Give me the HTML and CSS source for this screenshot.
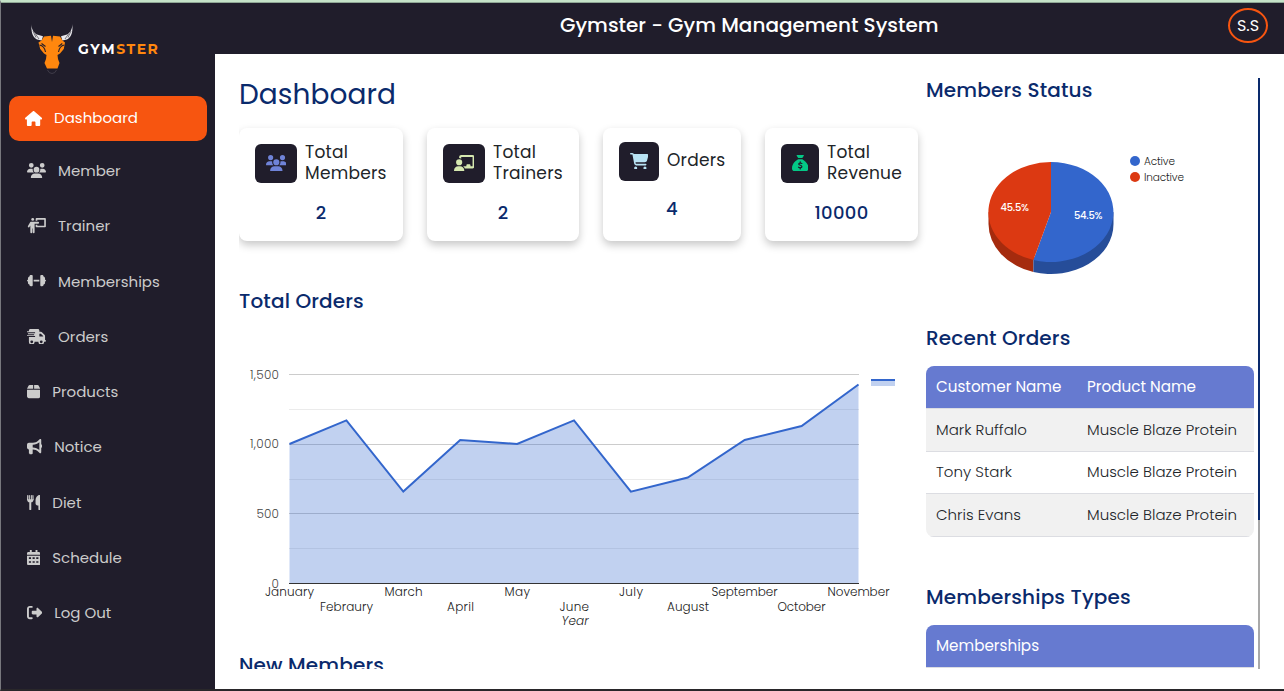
FILE: index.html
```html
<!DOCTYPE html>
<html lang="en">
<head>
<meta charset="utf-8">
<title>Gymster - Gym Management System</title>
<link rel="stylesheet" href="styles.css">
</head>
<body>
<div class="app">
  <aside class="sidebar">
    <div class="brand">
      <svg class="bull" viewBox="30 23 44 52">
        <path d="M31.2 24 C31.4 28 33 32.5 37 34.6 L43 36.2 L41.6 40.5 L37 39.4 C31.5 36.5 31.5 31 31.2 24Z M72.5 24 C72.3 28 71 32.5 67 34.6 L61 36.2 L62.4 40.5 L67 39.4 C72.5 36.5 72.5 31 72.5 24Z" fill="#e8e8ec"/>
        <path d="M33 31 L36 37.5 M35.5 34 L39 39 M71 31 L68 37.5 M68.5 34 L65 39" stroke="#55535c" stroke-width=".8"/>
        <path d="M44 36.5 L51 35.8 L52 42 L53 35.8 L60 36.5 L62.5 40.5 L65 42.5 L63.8 49 L60 53.5 L57.5 55 L58 59 L59.5 63 L57.5 68.5 L47 68.5 L44.5 63 L46 59 L46.5 55 L44 53.5 L40.2 49 L38.5 42.5 L41.5 40.5Z" fill="#ff870e"/>
        <path d="M39.5 45 Q44.5 46 45.5 52 M64.3 45 Q59.5 46 58.5 52 M41.5 43.5 L45.5 46.5 M62.3 43.5 L58.5 46.5" fill="none" stroke="#201d2b" stroke-width="1.1"/>
        <path d="M47.5 70 Q49 73.5 52 73.5 Q55 73.5 56.5 70" fill="none" stroke="#474450" stroke-width=".8"/>
      </svg>
      <span class="brand-name">GYM<b>STER</b></span>
    </div>
    <nav class="nav">
      <a class="nav-item active raised"><svg class="i512w" viewBox="0 0 576 512"><path d="M575.8 255.5c0 18-15 32.1-32 32.1h-32l.7 160.2c0 2.7-.2 5.4-.5 8.1V472c0 22.1-17.9 40-40 40H392c-22.1 0-40-17.9-40-40V384c0-17.7-14.3-32-32-32H256c-17.7 0-32 14.3-32 32v88c0 22.1-17.9 40-40 40H104c-22.1 0-40-17.9-40-40V287.6H32c-18 0-32-14-32-32.1c0-9 3-17 10-24L266.4 8c7-7 15-8 22-8s15 2 21 7L564.8 231.5c8 7 12 15 11 24z"/></svg><span>Dashboard</span></a>
      <a class="nav-item"><svg class="i640" viewBox="0 0 640 512"><path id="users" d="M144 0a80 80 0 1 1 0 160A80 80 0 1 1 144 0zM512 0a80 80 0 1 1 0 160A80 80 0 1 1 512 0zM0 298.7C0 239.8 47.8 192 106.7 192h42.7c15.9 0 31 3.5 44.6 9.7c-1.3 7.2-1.9 14.7-1.9 22.3c0 38.2 16.8 72.5 43.3 96H21.3C9.6 320 0 310.4 0 298.7zM404.6 320c26.6-23.5 43.3-57.8 43.3-96c0-7.6-.7-15-1.9-22.3c13.6-6.3 28.7-9.7 44.6-9.7h42.7C592.2 192 640 239.8 640 298.7c0 11.8-9.6 21.3-21.3 21.3H404.6zM224 224a96 96 0 1 1 192 0 96 96 0 1 1-192 0zM128 485.3C128 411.7 187.7 352 261.3 352H378.7C452.3 352 512 411.7 512 485.3c0 14.7-11.9 26.7-26.7 26.7H154.7c-14.7 0-26.7-11.9-26.7-26.7z"/></svg><span>Member</span></a>
      <a class="nav-item raised"><svg class="i640" viewBox="0 0 640 512"><circle cx="192" cy="48" r="48"/><path d="M145 128h230a32 32 0 0 1 0 64H256v288a32 32 0 0 1-64 0V352h-16v128a32 32 0 0 1-64 0V257l-25 42a32 32 0 0 1-55-33l58-97c14-25 30-41 55-41z"/><path d="M320 96V32h288v256H320v-64" fill="none" stroke="currentColor" stroke-width="56" stroke-linejoin="round"/></svg><span>Trainer</span></a>
      <a class="nav-item"><svg class="i640 dumbbell" viewBox="0 0 640 512"><path d="M128 64h32a32 32 0 0 1 32 32v320a32 32 0 0 1-32 32h-32c-26 0-48-22-48-48v-16c-26 0-48-22-48-48v-48a32 32 0 0 1 0-64v-48c0-26 22-48 48-48v-16c0-26 22-48 48-48zM512 64h-32a32 32 0 0 0-32 32v320a32 32 0 0 0 32 32h32c26 0 48-22 48-48v-16c26 0 48-22 48-48v-48a32 32 0 0 0 0-64v-48c0-26-22-48-48-48v-16c0-26-22-48-48-48zM224 224h192v64H224z"/></svg><span>Memberships</span></a>
      <a class="nav-item"><svg class="i640" viewBox="0 0 640 512"><path d="M112 0h256c26 0 48 22 48 48v48h51c17 0 33 7 45 19l77 77c12 12 19 28 19 45v131a32 32 0 0 1 0 64h-32a96 96 0 0 1-192 0H256a96 96 0 0 1-192 0V272h208v-32H0v-32h240v-32H32v-32h240v-32H0V80h64V48C64 22 86 0 112 0zm432 237-77-77h-51v96h128zM160 384a48 48 0 1 0 0 96 48 48 0 0 0 0-96zm320 0a48 48 0 1 0 0 96 48 48 0 0 0 0-96z" fill-rule="evenodd"/></svg><span>Orders</span></a>
      <a class="nav-item"><svg class="i448" viewBox="0 0 448 512"><path d="M50.7 58.5L0 160H208V32H93.7C75.5 32 58.9 42.3 50.7 58.5zM240 160H448L397.3 58.5C389.1 42.3 372.5 32 354.3 32H240V160zm208 32H0V416c0 35.3 28.7 64 64 64H384c35.3 0 64-28.7 64-64V192z"/></svg><span>Products</span></a>
      <a class="nav-item raised"><svg class="i512" viewBox="0 0 512 512"><path d="M480 32c0-12.9-7.8-24.6-19.8-29.6s-25.7-2.2-34.9 6.9L381.7 53c-48 48-113.1 75-181 75H64c-35.3 0-64 28.7-64 64v96c0 35.3 28.7 64 64 64v128c0 17.7 14.3 32 32 32h64c17.7 0 32-14.3 32-32V352h8.7c67.9 0 133 27 181 75l43.6 43.6c9.2 9.2 22.9 11.9 34.9 6.9s19.8-16.6 19.8-29.6V300.4c18.6-8.8 32-32.5 32-60.4s-13.4-51.6-32-60.4V32zm-64 76.7V371.3C357.2 317.8 280.5 288 200.7 288H192V192h8.7c79.8 0 156.5-29.8 215.3-83.3z"/></svg><span>Notice</span></a>
      <a class="nav-item"><svg class="i448" viewBox="0 0 448 512"><path d="M24 20L20 150M78 20V150M146 20V150M200 20L204 150M112 200V480" fill="none" stroke="currentColor" stroke-width="38" stroke-linecap="round"/><path d="M80 200h64v280a32 32 0 0 1-64 0zM2 140h220c0 60-34 108-84 108H86C36 248 2 200 2 140zM416 0c17 0 32 14 32 32v448a32 32 0 0 1-64 0V352h-32c-35 0-64-29-64-64V176C288 64 384 0 416 0z"/></svg><span>Diet</span></a>
      <a class="nav-item"><svg class="i448" viewBox="0 0 448 512"><path fill-rule="evenodd" d="M96 0h64v64h128V0h64v64h48c27 0 48 21 48 48v48H0v-48c0-27 21-48 48-48h48zM0 192h448v272c0 27-21 48-48 48H48c-27 0-48-21-48-48zm64 56v56h72v-56zm124 0v56h72v-56zm124 0v56h72v-56zM64 376v56h72v-56zm124 0v56h72v-56zm124 0v56h72v-56z"/></svg><span>Schedule</span></a>
      <a class="nav-item"><svg class="i512" viewBox="0 0 512 512"><path d="M377.9 105.9L500.7 228.7c7.2 7.2 11.3 17.1 11.3 27.3s-4.1 20.1-11.3 27.3L377.9 406.1c-6.4 6.4-15 9.9-24 9.9c-18.7 0-33.9-15.2-33.9-33.9V320H192c-17.7 0-32-14.3-32-32v-64c0-17.7 14.3-32 32-32h128v-62.1c0-18.7 15.2-33.9 33.9-33.9c9 0 17.6 3.6 24 9.9zM160 96H96c-17.7 0-32 14.3-32 32v256c0 17.7 14.3 32 32 32h64c17.7 0 32 14.3 32 32s-14.3 32-32 32H96c-53 0-96-43-96-96V128C0 75 43 32 96 32h64c17.7 0 32 14.3 32 32s-14.3 32-32 32z"/></svg><span>Log Out</span></a>
    </nav>
  </aside>
  <div class="page">
    <header class="topbar">
      <h1 class="title">Gymster - Gym Management System</h1>
      <div class="avatar">S.S</div>
    </header>
    <main class="content">
      <section class="left">
        <h2 class="heading">Dashboard</h2>
        <div class="cards">
          <article class="card c1">
            <div class="card-top"><span class="badge"><svg viewBox="0 0 640 512" fill="#6f83d8"><use href="#users"/></svg></span><span class="label">Total<br>Members</span></div>
            <strong class="value">2</strong>
          </article>
          <article class="card c2">
            <div class="card-top"><span class="badge"><svg viewBox="0 0 640 512" fill="#d5e8b0"><path d="M160 64c0-35.3 28.7-64 64-64H576c35.3 0 64 28.7 64 64V352c0 35.3-28.7 64-64 64H336.8c-11.8-25.5-29.9-47.5-52.4-64H384V320c0-17.7 14.3-32 32-32h64c17.7 0 32 14.3 32 32v32h64V64H224v49.1C205.2 102.2 183.3 96 160 96V64zm0 64a96 96 0 1 1 0 192 96 96 0 1 1 0-192zM133.3 352h53.3C260.3 352 320 411.7 320 485.3c0 14.7-11.9 26.7-26.7 26.7H26.7C11.9 512 0 502.3 0 485.3C0 411.7 59.7 352 133.3 352z"/></svg></span><span class="label">Total<br>Trainers</span></div>
            <strong class="value">2</strong>
          </article>
          <article class="card c3">
            <div class="card-top"><span class="badge"><svg viewBox="0 0 576 512" fill="#b9e3f3"><path d="M0 24C0 10.7 10.7 0 24 0H69.5c22 0 41.5 12.8 50.6 32h411c26.3 0 45.5 25 38.6 50.4l-41 152.3c-8.5 31.4-37 53.3-69.5 53.3H170.7l5.4 28.5c2.2 11.3 12.1 19.5 23.6 19.5H488c13.3 0 24 10.7 24 24s-10.7 24-24 24H199.7c-34.6 0-64.3-24.6-70.7-58.5L77.4 54.5c-.7-3.8-4-6.5-7.9-6.5H24C10.7 48 0 37.3 0 24zM128 464a48 48 0 1 1 96 0 48 48 0 1 1-96 0zm336-48a48 48 0 1 1 0 96 48 48 0 1 1 0-96z"/></svg></span><span class="label">Orders</span></div>
            <strong class="value">4</strong>
          </article>
          <article class="card c4">
            <div class="card-top"><span class="badge"><svg viewBox="0 0 512 512" fill="#04c886"><path d="M320 96H192L144.6 24.9C137.5 14.2 145.1 0 157.9 0H354.1c12.8 0 20.4 14.2 13.3 24.9L320 96zM192 128H320C382 169 512 245 512 416c0 53-43 96-96 96H96c-53 0-96-43-96-96C0 245 130 169 192 128z"/><path d="M306 262c-30-18-96-22-98 18c-2 50 100 28 98 80c-2 44-70 40-104 18M256 212v36M256 400v32" fill="none" stroke="#201d2b" stroke-width="38" stroke-linecap="round"/></svg></span><span class="label">Total<br>Revenue</span></div>
            <strong class="value">10000</strong>
          </article>
        </div>
        <h3 class="sub s-orders">Total Orders</h3>
        <svg class="area" viewBox="239 320 680 330">
          <path d="M289 374.5H859M289 444.5H859M289 513.5H859" stroke="#ccc"/>
          <path d="M289 409.5H859M289 479.5H859M289 548.5H859" stroke="#ebebeb"/>
          <path d="M289.5 583.5V444L346.4 420.4L403.3 491.6L460.2 440L517.1 444L574 420.4L630.9 491.6L687.8 477.5L744.7 440L801.6 426L858.5 384.5V583.5Z" fill="#36c" fill-opacity=".3"/>
          <path d="M289.5 444L346.4 420.4L403.3 491.6L460.2 440L517.1 444L574 420.4L630.9 491.6L687.8 477.5L744.7 440L801.6 426L858.5 384.5" fill="none" stroke="#36c" stroke-width="2"/>
          <path d="M289 583.5H859" stroke="#333"/>
          <path d="M871 379h24v7h-24z" fill="#c1d1f0"/><path d="M871 379h24v2h-24z" fill="#36c"/>
          <g class="y-axis">
            <text x="250" y="379" textLength="29">1,500</text><text x="250" y="448" textLength="29">1,000</text><text x="256.5" y="518" textLength="22.5">500</text><text x="271.5" y="588">0</text>
          </g>
          <g class="x-axis">
            <text x="265" y="596.3" textLength="49">January</text><text x="320" y="611.3" textLength="53">Febraury</text><text x="384.5" y="596.3" textLength="38">March</text><text x="447" y="611.3" textLength="27">April</text><text x="504.5" y="596.3" textLength="25.5">May</text><text x="559.5" y="611.3" textLength="29.5">June</text><text x="619" y="596.3" textLength="24">July</text><text x="667" y="611.3" textLength="42">August</text><text x="711.5" y="596.3" textLength="66">September</text><text x="777.5" y="611.3" textLength="48">October</text><text x="827.5" y="596.3" textLength="62">November</text>
            <text class="axis-title" x="561.5" y="625.3" textLength="27">Year</text>
          </g>
        </svg>
        <h3 class="sub s-new">New Members</h3>
      </section>
      <section class="right">
        <h3 class="sub">Members Status</h3>
        <svg class="pie" viewBox="926 102 328 222">
          <path d="M988.5 212V224A62.5 50 0 0 0 1033.4 272V250Z" fill="#a52b0e"/>
          <path d="M1113.5 212V224A62.5 50 0 0 1 1033.4 272V258Z" fill="#264d99"/>
          <path d="M1051 212V162A62.5 50 0 1 1 1033.4 260Z" fill="#36c"/>
          <path d="M1051 212L1033.4 260A62.5 50 0 0 1 1051 162Z" fill="#dc3912"/>
          <text class="slice" x="1000.5" y="211" textLength="28.5">45.5%</text><text class="slice" x="1074" y="219" textLength="28.5">54.5%</text>
          <circle cx="1135" cy="161" r="5" fill="#36c"/><circle cx="1135" cy="177" r="5" fill="#dc3912"/>
          <text class="legend" x="1144" y="165" textLength="31">Active</text><text class="legend" x="1144" y="181" textLength="40">Inactive</text>
        </svg>
        <h3 class="sub s-recent">Recent Orders</h3>
        <div class="table">
          <div class="row head"><span>Customer Name</span><span>Product Name</span></div>
          <div class="row odd"><span>Mark Ruffalo</span><span>Muscle Blaze Protein</span></div>
          <div class="row even"><span>Tony Stark</span><span>Muscle Blaze Protein</span></div>
          <div class="row odd"><span>Chris Evans</span><span>Muscle Blaze Protein</span></div>
        </div>
        <h3 class="sub s-types">Memberships Types</h3>
        <div class="table open"><div class="row head"><span>Memberships</span></div></div>
      </section>
      <div class="scrollbar"><div class="thumb"></div></div>
    </main>
  </div>
</div>
</body>
</html>
```
FILE: styles.css
```css
* { box-sizing: border-box; }
body { margin: 0; background: #fff; font-family: Poppins, Inter, "Noto Sans", sans-serif; color: #212529; }
h1, h2, h3 { margin: 0; font-weight: 500; white-space: nowrap; }
.app { display: flex; height: 691px; overflow: hidden; padding-top: 1px; background: linear-gradient(#8fa795 1px, #201d2b 1px); border-top: 2px solid #c5e2c8; border-left: 1px solid #77777d; border-bottom: 2px solid #29272a; }
.sidebar { width: 214px; flex: none; padding: 20px 8px 0; }
.brand { display: flex; height: 52px; padding-left: 21px; align-items: flex-start; }
.bull { width: 44px; height: 52px; }
.brand-name { margin: 17px 0 0 4px; font-family: Montserrat, Poppins, sans-serif; font-size: 14px; line-height: 18px; font-weight: 700; letter-spacing: 1.55px; color: #fff; }
.brand-name b { font-weight: 700; color: #ff870e; }
.nav { display: flex; flex-direction: column; gap: 10.25px; margin-top: 21px; }
.nav-item { display: flex; align-items: center; height: 45px; padding-left: 18px; gap: 12px; font-size: 15px; color: #ccc; fill: #ccc; white-space: nowrap; }
.nav-item.active { padding-left: 16px; background: #f75510; color: #fff; fill: #fff; border-radius: 10px; margin-bottom: -3px; }
.raised span { margin-bottom: 2px; }
.nav-item svg { height: 15.2px; flex: none; }
.nav-item .dumbbell { margin-bottom: 2px; }
.i640 { width: 19px; }
.i512w { width: 17.1px; }
.i512 { width: 15.2px; }
.i448 { width: 13.3px; }
.page { flex: 1; min-width: 0; display: flex; flex-direction: column; background: #fff; }
.topbar { height: 51px; flex: none; background: #201d2b; display: flex; justify-content: space-between; padding: 5px 16px 0 345px; }
.title { font-size: 20px; line-height: 34px; color: #fff; }
.avatar { width: 40px; height: 35px; border: 2px solid #f75510; border-radius: 50%; color: #fff; font-size: 16px; line-height: 31px; text-align: center; }
.content { display: flex; height: 591px; margin: 24px 0 0 24px; overflow: hidden; }
.left { width: 687px; flex: none; }
.heading { font-size: 28px; line-height: 34px; font-weight: 400; color: #0a2a6c; letter-spacing: .05px; }
.cards { display: flex; gap: 24px; margin-top: 16px; }
.card { height: 113px; padding: 14px 16px; border-radius: 8px; box-shadow: 0 4px 8px rgba(0,0,0,.22); display: flex; flex-direction: column; background: #fff; }
.c1 { width: 164px; } .c2 { width: 152px; } .c3 { width: 138px; } .c4 { width: 153px; }
.card-top { display: flex; gap: 8px; align-items: center; height: 42px; }
.c3 .card-top { height: 38px; }
.badge { width: 42px; height: 39px; flex: none; border-radius: 6px; background: #201d2b; display: flex; align-items: center; justify-content: center; }
.c3 .badge { width: 40px; } .c4 .badge { width: 38px; }
.badge svg { height: 16.5px; }
.label { font-size: 17px; line-height: 21px; letter-spacing: .25px; white-space: nowrap; }
.c3 .label { margin-bottom: 2px; }
.value { margin-top: 16px; text-align: center; font-size: 18px; line-height: 25px; font-weight: 500; letter-spacing: .3px; color: #0a2a6c; }
.c3 .value { margin-top: 16px; }
.sub { font-size: 20px; line-height: 24px; font-weight: 500; letter-spacing: .15px; color: #0a2a6c; }
.s-orders { margin-top: 48px; }
.area { display: block; width: 680px; height: 330px; margin-top: 7px; }
.s-new { margin-top: 3px; }
.y-axis text, .x-axis text { font-size: 12px; font-weight: 300; fill: #444; }
.x-axis text { fill: #222; }
.x-axis .axis-title { font-style: italic; }
.right { width: 328px; flex: none; }
.pie { display: block; width: 328px; height: 222px; }
.slice { font-size: 10px; font-weight: 500; fill: #fff; }
.legend { font-size: 10.5px; font-weight: 300; fill: #222; }
.s-recent { margin-top: 2px; }
.table { margin-top: 16px; border-radius: 8px; overflow: hidden; }
.table.open { border-radius: 8px 8px 0 0; }
.row { display: grid; grid-template-columns: 151px 1fr; height: 43px; padding: 0 0 2px 10px; align-items: center; border-bottom: 1px solid #dcdde2; font-size: 15px; font-weight: 300; letter-spacing: .02px; white-space: nowrap; }
.row.odd { background: #f1f1f1; }
.row.even { height: 42px; }
.row.head { background: #667ad0; color: #fff; font-size: 15.2px; font-weight: 400; letter-spacing: 0; }
.s-types { margin-top: 48px; }
.scrollbar { width: 2px; flex: none; margin-left: 4px; background: #a9a9a9; }
.thumb { height: 442px; background: #0a2a6c; }
```
